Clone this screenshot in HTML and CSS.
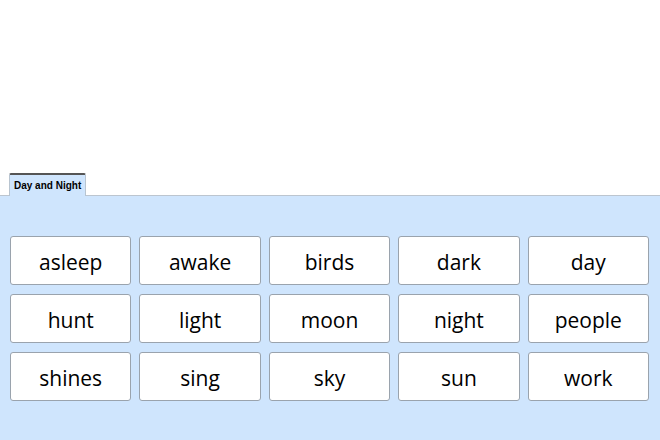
FILE: index.html
```html
<!DOCTYPE html>
<html lang="en">
  <head>
    <meta charset="UTF-8" />
    <title>Day and Night</title>
    <link rel="stylesheet" href="styles.css">
  </head>
  <body>
    <div class="top-space"></div>

    <div class="tabs">
      <div class="tab active">Day and Night</div>
    </div>

    <div class="panel">
      <div class="word-grid">
        <div class="word">asleep</div>
        <div class="word">awake</div>
        <div class="word">birds</div>
        <div class="word">dark</div>
        <div class="word">day</div>
        <div class="word">hunt</div>
        <div class="word">light</div>
        <div class="word">moon</div>
        <div class="word">night</div>
        <div class="word">people</div>
        <div class="word">shines</div>
        <div class="word">sing</div>
        <div class="word">sky</div>
        <div class="word">sun</div>
        <div class="word">work</div>
      </div>
    </div>
  </body>
</html>
```

FILE: styles.css
```css
html,
body {
  margin: 0;
  padding: 0;
  height: 100%;
}

body {
  font-family: "Open Sans", "Liberation Sans", sans-serif;
  background-color: white;
  color: #000;
  display: flex;
  flex-direction: column;
  overflow: hidden;
}

.top-space {
  height: 173px;
  flex-shrink: 0;
}

.tabs {
  display: flex;
  padding-left: 9px;
  height: 22px;
  flex-shrink: 0;
  position: relative;
  z-index: 1;
}

.tab {
  font-family: "Liberation Sans", Arial, sans-serif;
  font-size: 10px;
  font-weight: 700;
  color: #000;
  padding: 5px 4px 0 4px;
  border: 1px solid #b8c4d0;
  border-top: 2px solid #555;
  border-bottom: none;
  border-radius: 2px 2px 0 0;
  background-color: #cfe5fd;
  box-sizing: border-box;
  height: 23px;
}

.panel {
  flex-grow: 1;
  background-color: #cfe5fd;
  border-top: 1px solid #bcc5cf;
  padding: 40px 11px 0 10px;
}

.word-grid {
  display: grid;
  grid-template-columns: repeat(5, 1fr);
  grid-auto-rows: 49px;
  column-gap: 8px;
  row-gap: 9px;
}

.word {
  background-color: white;
  border: 1px solid #9aa3ad;
  border-radius: 3px;
  display: flex;
  align-items: center;
  justify-content: center;
  font-size: 21px;
  padding-top: 2px;
  box-sizing: border-box;
  color: #000;
}
```
